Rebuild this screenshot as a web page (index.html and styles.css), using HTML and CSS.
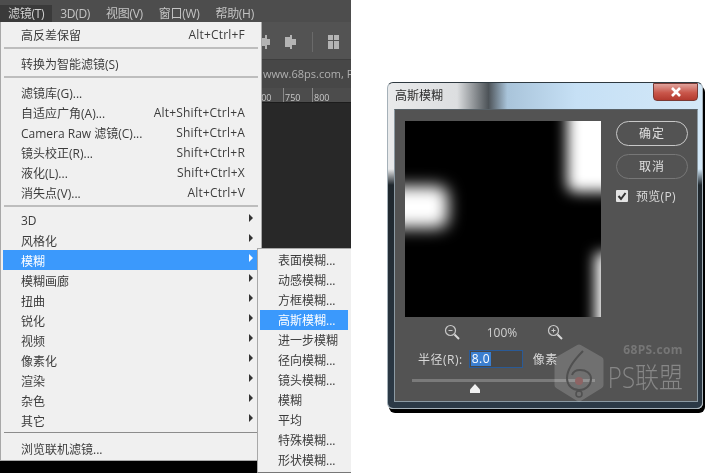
FILE: index.html
```html
<!DOCTYPE html>
<html lang="zh">
<head>
<meta charset="utf-8">
<title>高斯模糊</title>
<link rel="stylesheet" href="styles.css">
</head>
<body>
<div class="app">
  <div class="menubar">
    <span class="top active">滤镜(T)</span>
    <span class="top">3D(D)</span>
    <span class="top">视图(V)</span>
    <span class="top">窗口(W)</span>
    <span class="top">帮助(H)</span>
  </div>
  <div class="toolbar">
    <svg class="tools" width="80" height="20" viewBox="0 0 80 20">
      <g fill="#b4b4b4">
        <rect x="3" y="3" width="2" height="14"/><rect x="0" y="6" width="3" height="8"/><rect x="5" y="7" width="3" height="6"/>
        <rect x="28" y="3" width="2" height="14"/><rect x="23" y="5" width="5" height="10"/><rect x="30" y="7" width="4" height="6"/>
        <rect x="50" y="0" width="1" height="20" fill="#6a6a6a"/>
        <rect x="66" y="3" width="5" height="5"/><rect x="66" y="9" width="5" height="8"/><rect x="72" y="3" width="5" height="5"/><rect x="72" y="9" width="5" height="8"/>
      </g>
    </svg>
  </div>
  <div class="tabbar"><span class="tabtext">www.68ps.com, F</span></div>
  <div class="ruler"><span class="tick">700</span><span class="tick">750</span><span class="tick">800</span></div>
  <div class="canvas"></div>
  <div class="floor"></div>

  <div class="menu">
    <div class="row"><span>高反差保留</span><span class="key">Alt+Ctrl+F</span></div>
    <div class="sep"></div>
    <div class="row"><span>转换为智能滤镜(S)</span></div>
    <div class="sep"></div>
    <div class="row"><span>滤镜库(G)...</span></div>
    <div class="row"><span>自适应广角(A)...</span><span class="key">Alt+Shift+Ctrl+A</span></div>
    <div class="row"><span>Camera Raw 滤镜(C)...</span><span class="key">Shift+Ctrl+A</span></div>
    <div class="row"><span>镜头校正(R)...</span><span class="key">Shift+Ctrl+R</span></div>
    <div class="row"><span>液化(L)...</span><span class="key">Shift+Ctrl+X</span></div>
    <div class="row"><span>消失点(V)...</span><span class="key">Alt+Ctrl+V</span></div>
    <div class="sep third"></div>
    <div class="row sub"><span>3D</span></div>
    <div class="row sub"><span>风格化</span></div>
    <div class="row sub on"><span>模糊</span></div>
    <div class="row sub"><span>模糊画廊</span></div>
    <div class="row sub"><span>扭曲</span></div>
    <div class="row sub"><span>锐化</span></div>
    <div class="row sub"><span>视频</span></div>
    <div class="row sub"><span>像素化</span></div>
    <div class="row sub"><span>渲染</span></div>
    <div class="row sub"><span>杂色</span></div>
    <div class="row sub"><span>其它</span></div>
    <div class="sep thin"></div>
    <div class="row"><span>浏览联机滤镜...</span></div>
  </div>

  <div class="submenu">
    <div class="subrow">表面模糊...</div>
    <div class="subrow">动感模糊...</div>
    <div class="subrow">方框模糊...</div>
    <div class="subrow on">高斯模糊...</div>
    <div class="subrow">进一步模糊</div>
    <div class="subrow">径向模糊...</div>
    <div class="subrow">镜头模糊...</div>
    <div class="subrow">模糊</div>
    <div class="subrow">平均</div>
    <div class="subrow">特殊模糊...</div>
    <div class="subrow">形状模糊...</div>
  </div>
</div>

<div class="stage">
  <div class="dialog">
    <div class="titlebar">
      <span class="title">高斯模糊</span>
      <span class="close">
        <svg width="12" height="10" viewBox="0 0 12 10"><path d="M2 1 L10 9 M10 1 L2 9" stroke="#fff" stroke-width="2.6" fill="none"/></svg>
      </span>
    </div>
    <div class="panel">
      <div class="upper">
        <div class="left">
          <div class="preview">
            <div class="blob blob-a"></div>
            <div class="blob blob-b"></div>
            <div class="blob blob-c"></div>
          </div>
          <div class="zoom">
            <svg width="16" height="16" viewBox="0 0 16 16"><circle cx="6.5" cy="6.5" r="5" fill="none" stroke="#c8c8c8" stroke-width="1.2"/><path d="M4.5 6.5H8.5" stroke="#c8c8c8"/><path d="M10.5 10.5L15 15" stroke="#d8d8d8" stroke-width="2"/></svg>
            <span class="pct">100%</span>
            <svg width="16" height="16" viewBox="0 0 16 16"><circle cx="6.5" cy="6.5" r="5" fill="none" stroke="#c8c8c8" stroke-width="1.2"/><path d="M4.5 6.5H8.5M6.5 4.5V8.5" stroke="#c8c8c8"/><path d="M10.5 10.5L15 15" stroke="#d8d8d8" stroke-width="2"/></svg>
          </div>
        </div>
        <div class="side">
          <div class="btn primary">确定</div>
          <div class="btn">取消</div>
          <div class="check">
            <span class="box"><svg width="12" height="12" viewBox="0 0 12 12"><path d="M2.5 6 L5 9 L9.5 3" stroke="#333" stroke-width="2" fill="none"/></svg></span>
            <span>预览(P)</span>
          </div>
        </div>
      </div>
      <div class="radius">
        <span>半径(R):</span>
        <span class="field"><span class="sel">8.0</span></span>
        <span>像素</span>
      </div>
      <div class="slider"><span class="thumb"></span></div>
      <div class="mark">
        <svg class="hex" width="52" height="58" viewBox="0 0 52 58">
          <path d="M26 4 L47 16 V41 L26 54 L5 41 V16 Z" fill="#fff" stroke="#fff" opacity=".17" stroke-width="7" stroke-linejoin="round"/>
          <path d="M30 7 C19 18 14 26 14 34 C14 42 20 46 26 46 C33 46 38 41 38 35 C38 29 33 26 27 26 C23 26 20 28 19 31" fill="none" stroke="#505050" stroke-width="2"/>
          <circle cx="26" cy="37" r="4" fill="#8e6464"/>
          <circle cx="26" cy="50" r="3" fill="none" stroke="#505050" stroke-width="1.5"/>
        </svg>
        <div class="marktext">
          <span class="mark-a">68PS.com</span>
          <span class="mark-b">PS联盟</span>
        </div>
      </div>
    </div>
  </div>
</div>
</body>
</html>
```

FILE: styles.css
```css
* { box-sizing: border-box; }
html, body { margin: 0; height: 100%; }
body {
  width: 705px;
  height: 473px;
  overflow: hidden;
  background: #fff;
  display: flex;
  font-family: "Open Sans", "Noto Sans CJK SC", sans-serif;
  font-size: 12px;
}

/* Photoshop window */
.app {
  position: relative;
  width: 351px;
  height: 473px;
  display: flex;
  flex-direction: column;
  background: #282828;
  filter: blur(.35px);
}
.menubar {
  height: 22px;
  padding-top: 5px;
  display: flex;
  background: #4d4d4d;
  color: #c4c4c4;
  letter-spacing: -.3px;
}
.top { height: 17px; line-height: 17px; padding: 0 8px; white-space: nowrap; }
.active { background: #3a3a3a; color: #d0d0d0; }
.toolbar {
  height: 38px;
  background: #535353;
  border-bottom: 1px solid #3e3e3e;
  padding: 10px 0 0 262px;
}
.tools { display: block; }
.tabbar {
  height: 28px;
  background: #474747;
  padding: 6px 0 0 263px;
  font-size: 11px;
  line-height: 16px;
  color: #b0b0b0;
  white-space: nowrap;
  overflow: hidden;
}
.ruler {
  height: 15px;
  background: #4c4c4c;
  padding-left: 254px;
  display: flex;
  font-size: 9px;
  line-height: 19px;
  color: #c8c8c8;
  border-bottom: 1px solid #1c1c1c;
  overflow: hidden;
}
.tick { width: 29px; padding-left: 1px; border-left: 1px solid #8a8a8a; }
.canvas { flex: 1; background: #282828; }
.floor { height: 12px; background: #000; }

/* Filter menu */
.menu {
  position: absolute;
  left: 0;
  top: 22px;
  width: 262px;
  height: 439px;
  padding: 2px 3px 0 0;
  background: #f0f0f0;
  border: 1px solid #a8a8a8;
  border-top: 0;
  color: #3c3c3c;
}
.row {
  height: 20px;
  margin-left: 2px;
  padding: 1px 13px 0 18px;
  display: flex;
  justify-content: space-between;
  align-items: center;
  position: relative;
  white-space: nowrap;
}
.key { letter-spacing: .2px; }
.row.on { background: #3b99fc; color: #fff; }
.sub::after {
  content: "";
  position: absolute;
  right: 5px;
  top: 4px;
  border-left: 4px solid #333;
  border-top: 4px solid transparent;
  border-bottom: 4px solid transparent;
}
.row.on::after { border-left-color: #fff; }
.sep { height: 2px; margin: 3px 0 4px 3px; background: #bdbdbd; }
.sep.third { margin-bottom: 3px; }
.sep.thin { height: 1px; margin: 2px 0 5px 3px; background: #8c8c8c; }

.submenu {
  position: absolute;
  left: 257px;
  top: 248px;
  width: 94px;
  height: 225px;
  padding: 1px 3px 0 2px;
  background: #f0f0f0;
  border: 1px solid #a8a8a8;
  border-right: 0;
  border-bottom-color: #777;
  color: #3c3c3c;
}
.subrow { height: 20px; line-height: 21px; padding-left: 18px; white-space: nowrap; }
.subrow.on { background: #3b99fc; color: #fff; }

/* Dialog */
.stage {
  flex: 1;
  padding: 82px 0 0 36px;
  filter: blur(.35px);
}
.dialog {
  width: 316px;
  height: 327px;
  border: 1px solid #a5b1b9;
  border-top-color: #2e3940;
  border-radius: 6px;
  padding: 0 4px 6px 6px;
  box-shadow: 2px 4px 0 #000;
  background:
    linear-gradient(180deg, transparent 0, transparent 86px, #1f272d 102px, #2c3a47 100%),
    linear-gradient(90deg, #e9eaeb 0, #dcdee0 22%, #4d5358 32%, #a9c4da 38%, #c6e0f5 60%, #d3e8f8 100%);
  display: flex;
  flex-direction: column;
}
.titlebar {
  height: 26px;
  flex: none;
  display: flex;
  justify-content: space-between;
  padding: 4px 0 0 1px;
}
.title { color: #2d2d2d; line-height: 18px; }
.close {
  width: 45px;
  height: 18px;
  border-radius: 0 0 4px 4px;
  margin-top: -4px;
  border: 1px solid #7a3a35;
  background: linear-gradient(180deg, #e0a39c 0, #c9564a 55%, #b33a2f 100%);
  display: flex;
  align-items: center;
  justify-content: center;
}
.panel {
  position: relative;
  flex: 1;
  background: #535353;
  border: 1px solid #8c9aa3;
  border-top-color: #596268;
  padding: 11px 9px 0 10px;
  color: #d8d8d8;
}
.upper { display: flex; gap: 15px; }
.preview {
  position: relative;
  width: 196px;
  height: 196px;
  background: #000;
  overflow: hidden;
}
.blob { position: absolute; background: #fff; filter: blur(7px); }
.blob-a { left: 162px; top: -20px; width: 60px; height: 91px; border-radius: 8px; }
.blob-b { left: -30px; top: 65px; width: 73px; height: 42px; border-radius: 10px; filter: blur(8px); }
.blob-c { left: 190px; top: 132px; width: 40px; height: 90px; }
.zoom {
  height: 30px;
  padding: 0 0 0 39px;
  display: flex;
  align-items: center;
  color: #d0d0d0;
}
.pct { width: 87px; text-align: center; padding-right: 3px; }
.side { display: flex; flex-direction: column; width: 72px; }
.btn {
  height: 25px;
  margin-bottom: 8px;
  border: 1px solid #777;
  border-radius: 13px;
  text-align: center;
  line-height: 23px;
  letter-spacing: 1px;
  color: #e0e0e0;
}
.btn.primary { border-color: #c8c8c8; }
.check { display: flex; align-items: center; gap: 8px; letter-spacing: .3px; }
.box {
  width: 12px;
  height: 12px;
  background: #e4e4e4;
  border-radius: 1px;
  display: block;
  line-height: 0;
}
.radius {
  margin-top: 3px;
  padding-left: 13px;
  height: 18px;
  display: flex;
  align-items: center;
  gap: 6px;
  letter-spacing: .5px;
}
.field {
  width: 54px;
  height: 18px;
  background: #474747;
  border: 1px solid #2a5a96;
  padding: 1px 1px;
  line-height: 14px;
  display: block;
  margin-right: 4px;
}
.sel { display: inline-block; height: 14px; background: #3b7fd0; color: #fff; padding: 0 1px; }
.slider {
  position: relative;
  height: 3px;
  margin: 11px 0 0 7px;
  width: 183px;
  background: #7a7a7a;
}
.thumb {
  position: absolute;
  left: 58px;
  top: 5px;
  width: 10px;
  height: 9px;
  background: #f0f0f0;
  clip-path: polygon(50% 0, 100% 60%, 100% 100%, 0 100%, 0 60%);
}
.mark {
  position: absolute;
  left: 158px;
  top: 234px;
  display: flex;
}
.hex { display: block; }
.marktext { display: flex; flex-direction: column; align-items: flex-end; width: 78px; }
.mark-a { font-size: 12px; font-weight: 700; color: #767676; line-height: 12px; letter-spacing: .4px; }
.mark-b { font-size: 24px; line-height: 26px; margin-top: 8px; color: #878787; white-space: nowrap; font-weight: 300; transform: scaleY(1.2); }
```
